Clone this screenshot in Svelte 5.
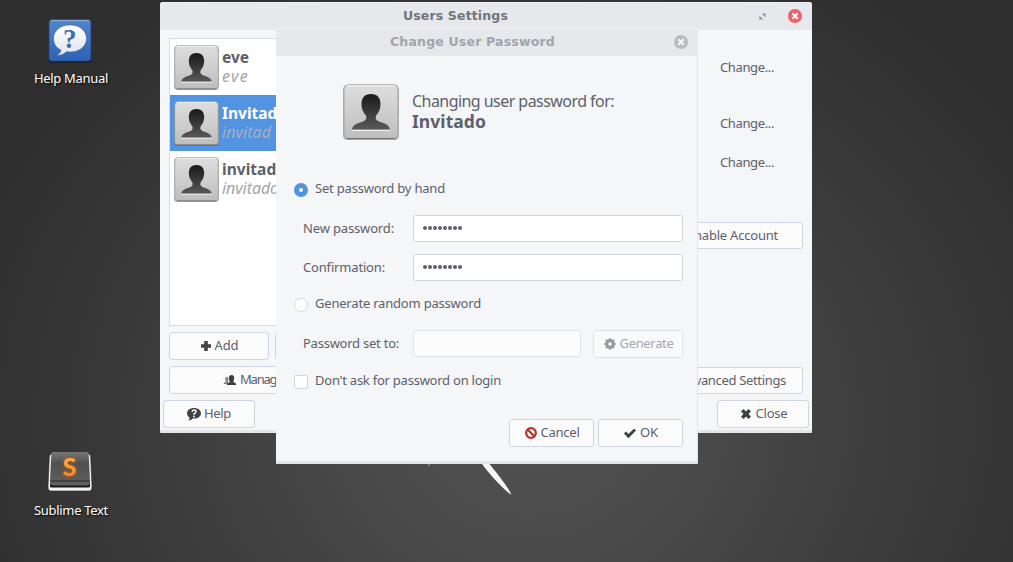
<script>
  const users = [
    { name: 'eve', login: 'eve', nameWidth: 27, loginWidth: 27 },
    { name: 'Invitado', login: 'invitad', nameWidth: 65, loginWidth: 49, selected: true },
    { name: 'invitado', login: 'invitado', nameWidth: 64, loginWidth: 57 }
  ];

  // Adjusts tracking so that a label takes the given width in pixels.
  function fit(node, width) {
    const count = node.textContent.length;
    const natural = node.getBoundingClientRect().width;
    node.style.letterSpacing = (width - natural) / count + 'px';
  }
</script>

{#snippet label(text, width)}<span class="fit" use:fit={width}>{text}</span>{/snippet}

{#snippet avatar(size, id)}
  <svg class="avatar" width={size} height={size} viewBox="0 0 56 56">
    <defs>
      <linearGradient id="plate{id}" x2="0" y2="1"><stop stop-color="#dedede" /><stop offset="1" stop-color="#bebebe" /></linearGradient>
      <linearGradient id="body{id}" x2="0" y2="1"><stop stop-color="#1a1a1a" /><stop offset="1" stop-color="#585858" /></linearGradient>
    </defs>
    <rect x="0" y="1" width="56" height="55.500" rx="5" fill="#555" opacity=".4" />
    <rect x="1" y=".8" width="54" height="53.700" rx="4" fill="url(#plate{id})" stroke="#a4a4a4" />
    <path d="M4 1.800H52" stroke="#f7f7f7" />
    <path d="M3.500 54.700H52.500" stroke="#666" />
    <path d="M9 45.500C10 40 15 39.500 20 37.500C23.500 36 24 33.500 22.500 31C20 28 18.500 25 18.500 20C18.500 14 21.500 10 28 10C34.500 10 37.500 14 37.500 20C37.500 25 36 28 33.500 31C32 33.500 32.500 36 36 37.500C41 39.500 46 40 47 45.500Z" fill="url(#body{id})" />
    <path d="M9 46.500H47" stroke="#f2f2f2" />
  </svg>
{/snippet}

{#snippet cross(color)}
  <svg class="winclose" width="14" height="14" viewBox="0 0 14 14">
    <circle cx="7" cy="7" r="7" fill={color} />
    <path d="M4.300 4.300L9.700 9.700M9.700 4.300L4.300 9.700" stroke="#f7f7f9" stroke-width="2.200" />
  </svg>
{/snippet}

<main class="desktop">
  <svg class="wallpaper" width="1013" height="562" viewBox="0 0 1013 562">
    <path d="M480 461L487 461C496 472 506 484 511.500 494.500C509 494.500 490 476 480 461Z" fill="#f5f5f5" />
    <path d="M428 466L431 463" stroke="#aaa796" />
  </svg>

  <div class="launcher help">
    <svg width="46" height="46" viewBox="0 0 46 46">
      <defs><linearGradient id="blue" x2="0" y2="1"><stop stop-color="#5486ca" /><stop offset="1" stop-color="#2f60b4" /></linearGradient>
        <linearGradient id="bubble" x2="0" y2="1"><stop stop-color="#fff" /><stop offset="1" stop-color="#dfe3e9" /></linearGradient></defs>
      <rect x="1.500" y="2.500" width="43" height="42.500" rx="3.500" fill="#151515" opacity=".6" />
      <rect x="2" y="1.500" width="42" height="41.500" rx="3" fill="url(#blue)" stroke="#23498c" stroke-width=".8" />
      <path d="M4 2.500H42" stroke="#86aee2" />
      <path d="M23 7C13 7 6.500 13 6.500 20.500C6.500 26 9.500 30 14 32C13.500 34.500 12 36 9.500 37.500C14 37.500 17.500 36 19.500 33.700C31 35.500 39.500 29 39.500 20.500C39.500 13 33 7 23 7Z" fill="url(#bubble)" stroke="#2b559d" stroke-width=".5" />
      <text x="22.700" y="30" text-anchor="middle" font-family="Liberation Serif, serif" font-size="27" font-weight="700" fill="#3e6cb1">?</text>
    </svg>
    <span class="caption">{@render label('Help Manual', 74)}</span>
  </div>

  <div class="launcher sublime">
    <svg width="46" height="46" viewBox="0 0 46 46">
      <defs><linearGradient id="key" x2="0" y2="1"><stop stop-color="#777" /><stop offset=".35" stop-color="#505050" /><stop offset="1" stop-color="#616161" /></linearGradient>
        <linearGradient id="orange" x2="0" y2="1"><stop stop-color="#ffc27b" /><stop offset="1" stop-color="#f77b08" /></linearGradient></defs>
      <path d="M4 3Q2.500 3 2.300 6L1 35.500Q1 40 4 40H42Q45 40 45 35.500L43.700 6Q43.500 3 42 3Z" fill="#f2f2f2" stroke="#222" stroke-width=".6" />
      <path d="M3 32.500V35.500Q3 36.500 5 36.500H41Q43 36.500 43 35.500V31Z" fill="#171717" />
      <path d="M6 1H40Q41.500 1 41.700 3L43 30.500Q43 34.500 40 34.500H6Q3 34.500 3 30.500L4.300 3Q4.500 1 6 1Z" fill="url(#key)" />
      <path d="M3.500 30H42.500" stroke="#383838" stroke-width="1.300" />
      <text class="glow" x="22.500" y="25" text-anchor="middle" font-family="Lato, sans-serif" font-size="25" font-weight="700" fill="url(#orange)" stroke="#f98c1c" stroke-width=".5">S</text>
    </svg>
    <span class="caption">{@render label('Sublime Text', 74)}</span>
  </div>

  <section class="window settings">
    <header class="titlebar"><h1>{@render label('Users Settings', 105)}</h1>
      <svg class="maximize" width="7" height="7" viewBox="0 0 8 8"><path d="M3 .5H7.500V5ZM.5 3V7.500H5Z" fill="#8c9099" /><path d="M0 0L8 8" stroke="#e7e8eb" stroke-width="1.500" /></svg>
      {@render cross('#ee606b')}
    </header>
    <div class="content">
      <div class="left">
        <ul class="users">
          {#each users as user, i}
            <li class:selected={user.selected}>
              {@render avatar(45, i)}
              <div><b>{@render label(user.name, user.nameWidth)}</b><i>{@render label(user.login, user.loginWidth)}</i></div>
            </li>
          {/each}
        </ul>
        <div class="pair">
          <button><svg width="10" height="10" viewBox="0 0 11 11"><path d="M3.500 0H7.500V3.500H11V7.500H7.500V11H3.500V7.500H0V3.500H3.500Z" fill="#444649" /></svg>{@render label('Add', 24)}</button>
          <button>{@render label('Delete', 38)}</button>
        </div>
        <button class="manage">
          <svg width="14" height="10" viewBox="0 0 14 11"><path d="M0 10Q0 8 2.500 7.500C3 7 1.300 5.500 1.700 3.500Q2 1.800 3.700 1.800Q5 2 5 4V10Z" fill="#85878b" /><path d="M3.500 11Q3.500 8.500 6.500 8C7.500 7.500 5.500 6 5.700 3Q6 0 8.700 0Q11.400 0 11.600 3C11.800 6 10 7.500 11 8Q14 8.500 14 11Z" fill="#3c3e41" /></svg>{@render label('Manage Groups', 82)}</button>
      </div>
      <div class="right">
        <button class="flat">{@render label('Change...', 54)}</button>
        <button class="flat second">{@render label('Change...', 54)}</button>
        <button class="flat third">{@render label('Change...', 54)}</button>
        <button class="enable">{@render label('Enable Account', 91)}</button>
        <button class="advanced">{@render label('Advanced Settings', 107)}</button>
      </div>
    </div>
    <footer>
      <button><svg width="14" height="13" viewBox="0 0 14 13"><path d="M7 0C3 0 0 2.200 0 5.300Q0 7.800 2.500 9.500Q2.600 11.300 1.500 12.500Q4.500 12.500 5.700 10.500C10.500 11 14 8.700 14 5.300C14 2.200 11 0 7 0Z" fill="#3f4144" /><path d="M5 3.800Q5.200 2 7.100 2Q9 2 9 3.700Q9 4.900 7.100 5.500V6.800" fill="none" stroke="#fff" stroke-width="1.400" /><circle cx="7" cy="8.500" r=".9" fill="#fff" /></svg>{@render label('Help', 27)}</button>
      <button class="close"><svg width="10" height="10" viewBox="0 0 11 11"><path d="M2.800 0L5.500 2.700L8.200 0L11 2.500L8.300 5.500L11 8.500L8.200 11L5.500 8.300L2.800 11L0 8.500L2.700 5.500L0 2.500Z" fill="#3f4144" /></svg>{@render label('Close', 32)}</button>
    </footer>
  </section>

  <section class="window dialog">
    <header class="titlebar"><h1>{@render label('Change User Password', 165)}</h1>{@render cross('#b9bbbf')}</header>
    <div class="intro">
      {@render avatar(56, 'dialog')}
      <div><p>{@render label('Changing user password for:', 202)}</p><strong>{@render label('Invitado', 74)}</strong></div>
    </div>
    <form>
      <div class="choice first"><span class="radio on"></span>{@render label('Set password by hand', 130)}</div>
      <div class="field new"><span class="name">{@render label('New password:', 91)}</span><span class="entry"><i></i><i></i><i></i><i></i><i></i><i></i><i></i><i></i></span></div>
      <div class="field confirm"><span class="name">{@render label('Confirmation:', 82)}</span><span class="entry"><i></i><i></i><i></i><i></i><i></i><i></i><i></i><i></i></span></div>
      <div class="choice random"><span class="radio"></span>{@render label('Generate random password', 166)}</div>
      <div class="field generated"><span class="name">{@render label('Password set to:', 96)}</span><span class="entry off"></span>
        <button type="button" class="off"><svg width="12" height="12" viewBox="-6.500 -6.500 13 13"><g stroke="#999a9c" fill="none"><circle r="3.600" stroke-width="3.400" /><path stroke-width="2.200" d="M0 -6.200V-4M0 6.200V4M-6.200 0H-4M6.200 0H4M-4.400 -4.400L-3 -3M4.400 4.400L3 3M-4.400 4.400L-3 3M4.400 -4.400L3 -3" /></g></svg>{@render label('Generate', 54)}</button>
      </div>
      <div class="choice ask"><span class="check"></span>{@render label("Don't ask for password on login", 186)}</div>
      <div class="actions">
        <button type="button"><svg width="12" height="12" viewBox="0 0 12 12"><g fill="none" stroke="#bd302a" stroke-width="2.300"><circle cx="6" cy="6" r="4.800" /><path d="M2.500 2.500L9.500 9.500" /></g></svg>{@render label('Cancel', 39)}</button>
        <button type="button"><svg width="12" height="11" viewBox="0 0 12 11"><path d="M0 5.500L2 3.600L4.300 6L10 .7L12 2.500L4.400 10.200Z" fill="#3c3e41" /></svg>{@render label('OK', 18)}</button>
      </div>
    </form>
  </section>
</main>

<style>
  :global(body) { margin: 0; overflow: hidden; }
  .desktop { position: relative; width: 1013px; height: 562px; overflow: hidden; background: radial-gradient(ellipse 590px 520px at 530px 420px, #515151 0%, #4b4b4b 25%, #3b3b3b 65%, #2f2f2f 100%); font: 13px/18px "Noto Sans", sans-serif; color: #5c616c; }
  .desktop * { box-sizing: border-box; }
  .desktop svg { flex: none; display: block; }
  .wallpaper { position: absolute; inset: 0; }
  .fit { display: inline-block; white-space: pre; }
  .launcher { position: absolute; left: 21px; width: 100px; display: flex; flex-direction: column; align-items: center; }
  .launcher svg { margin-right: 2px; }
  .help { top: 18px; }
  .sublime { top: 451px; }
  .caption { margin-top: 4px; color: #fff; text-shadow: 1px 1px 2px #000; }
  .help .caption { margin-top: 5px; }
  .glow { filter: drop-shadow(0 0 2px #a65818); }
  .window { position: absolute; background: #f5f6f8; border-radius: 3px 3px 1px 1px; border-bottom: 3px solid #e4e6e9; }
  .settings { left: 160px; top: 2px; width: 652px; height: 431px; }
  .dialog { left: 276px; top: 28px; width: 422px; height: 436px; box-shadow: -1px 0 #e3e4e8 inset; }
  .titlebar { display: grid; grid-template-columns: 1fr auto auto; align-items: center; background: #e7e8eb; height: 28px; border-radius: 3px 3px 0 0; border-top: 1px solid #f0f1f3; }
  h1 { margin: 0; padding: 0 0 2px 243px; font: bold 12.500px/18px "DejaVu Sans", sans-serif; color: #70757f; }
  .maximize { margin: 0 22px 1px 0; }
  .winclose { margin: 0 10px 1px 0; }
  .dialog h1 { padding-left: 114px; color: #a0a4ad; }
  .dialog .titlebar { border-radius: 0; border-color: #eeeff1; }
  .content { display: flex; justify-content: space-between; padding: 8px 9px 0; height: 364px; }
  .left { width: 206px; display: flex; flex-direction: column; gap: 6px; }
  .users { margin: 0; padding: 0; height: 288px; background: #fff; border: 1px solid #d9dce2; list-style: none; }
  li { height: 56px; display: flex; align-items: center; padding-left: 4px; gap: 3px; font-size: 15.500px; line-height: 19px; }
  li b, li i { display: block; height: 19px; }
  li div { margin-top: -1px; }
  li i { color: #a3a5a9; font-size: 16px; }
  li.selected { background: #5294e2; color: #fff; }
  li.selected i { color: #a9afb8; }
  .pair { display: flex; gap: 6px; }
  .pair button { width: 100px; }
  button { height: 28px; padding: 0 0 0 1px; display: flex; align-items: center; justify-content: center; gap: 4px; font: inherit; color: inherit; background: #fbfbfc; border: 1px solid #ced5e1; border-radius: 3px; }
  button .fit { margin-bottom: 2px; }
  .manage { width: 206px; gap: 3px; }
  .right { width: 220px; display: flex; flex-direction: column; align-items: flex-end; }
  .right button { height: 27px; padding: 0; }
  .right .flat { width: 112px; background: none; border-color: transparent; margin-top: 16px; }
  .right .second { margin-top: 29px; }
  .right .third { margin-top: 12px; }
  .right .enable { width: 141px; margin-top: 46px; }
  .right .advanced { width: 141px; margin-top: 118px; }
  footer { display: flex; justify-content: space-between; padding: 6px 3px 0; }
  footer button { width: 92px; gap: 3px; padding: 0; }
  footer .close { gap: 5px; padding-left: 2px; }
  .intro { display: flex; gap: 13px; padding: 28px 0 0 67px; height: 97px; }
  .intro div { padding-top: 7px; font-size: 16px; line-height: 20px; }
  .intro p { margin: 0; height: 20px; }
  .intro strong { display: block; font-size: 17.500px; line-height: 21px; }
  .choice { display: flex; height: 18px; gap: 7px; padding-left: 18px; align-items: center; }
  .first { margin-top: 26px; }
  .radio { width: 14px; height: 14px; margin-top: 4px; border-radius: 50%; background: #fff; border: 1px solid #d3d8e2; }
  .on { border: 5px solid #5294e2; }
  .check { width: 14px; height: 14px; margin-top: 4px; border-radius: 2px; background: #fff; border: 1px solid #ced5e1; }
  .field { display: flex; padding: 0 15px 0 27px; }
  .name { width: 110px; padding-top: 4px; }
  .entry { flex: 1; height: 27px; background: #fff; border: 1px solid #ced3df; border-radius: 3px; display: flex; align-items: center; gap: 1.500px; padding: 0 0 1px 9px; }
  .entry i { width: 3.500px; height: 3.500px; border-radius: 2px; background: #5c616c; }
  .entry.off { background: #fbfbfc; border-color: #e0e3e9; }
  .new { margin-top: 18px; }
  .confirm { margin-top: 12px; }
  .random { margin-top: 13px; }
  .generated { margin-top: 18px; }
  button.off { width: 90px; margin-left: 12px; border-color: #e0e3e9; background: #f9fafb; color: #a5a8ae; }
  .ask { margin-top: 13px; }
  .actions { display: flex; justify-content: flex-end; gap: 4px; padding-right: 15px; margin-top: 30px; }
  .actions button { width: 85px; }
</style>
